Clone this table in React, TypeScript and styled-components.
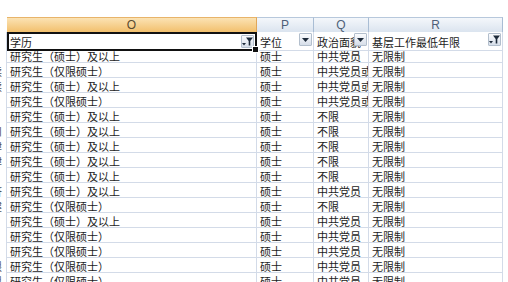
import styled, { createGlobalStyle, css } from "styled-components";

const GlobalStyle = createGlobalStyle`
    html, body {
        margin: 0;
        padding: 0;
        background: #ffffff;
        overflow: hidden;
    }
    body {
        font-family: "Noto Sans CJK SC", "Liberation Sans", sans-serif;
    }
`;

const COLS = "7px 250px 57px 55px 134px";
const GRID = "#d3dbe8";

const Sheet = styled.div`
    width: 508px;
    height: 282px;
    padding-top: 17px;
    box-sizing: border-box;
    overflow: hidden;
`;

const Row = styled.div<{ $h: number }>`
    display: grid;
    grid-template-columns: ${COLS};
    height: ${(p) => p.$h}px;
`;

const ColHead = styled.div<{ $active?: boolean; $blank?: boolean }>`
    display: flex;
    align-items: center;
    justify-content: center;
    font-family: "Liberation Sans", Arial, sans-serif;
    font-size: 12px;
    color: #4d5f78;
    box-sizing: border-box;
    border-right: 1px solid #a9bdd4;
    border-top: 1px solid #b7c8dc;
    background: linear-gradient(#f4f7fb, #dbe4ef);
    ${(p) =>
        p.$active &&
        css`
            background: linear-gradient(#fbe3b4, #f2c06d);
            color: #5a4a30;
            border-right-color: #e0a75a;
            border-top-color: #e8b46a;
        `}
    ${(p) =>
        p.$blank &&
        css`
            background: #ffffff;
            border: none;
        `}
`;

const Cell = styled.div<{ $edge?: boolean }>`
    position: relative;
    display: flex;
    align-items: center;
    padding: 1px 0 0 3px;
    box-sizing: border-box;
    font-size: 11px;
    line-height: 14px;
    color: #1c1c1c;
    white-space: nowrap;
    overflow: hidden;
    border-right: 1px solid ${GRID};
    border-bottom: 1px solid ${GRID};
    ${(p) =>
        p.$edge &&
        css`
            justify-content: flex-end;
            padding: 1px 4px 0 0;
            border-bottom: none;
            color: #555555;
        `}
`;

const Selected = styled(Cell)`
    overflow: visible;
    border: 2px solid #111111;
    padding-left: 1px;
    z-index: 2;
`;

const Clip = styled.span`
    overflow: hidden;
    display: block;
`;

const Handle = styled.span`
    position: absolute;
    right: -4px;
    bottom: -4px;
    width: 5px;
    height: 5px;
    background: #111111;
    border: 1px solid #ffffff;
`;

const FilterBtn = styled.span`
    position: absolute;
    right: 1px;
    top: 1px;
    width: 13px;
    height: 13px;
    box-sizing: border-box;
    border: 1px solid #b3bfcd;
    border-radius: 1px;
    background: linear-gradient(#fbfcfe, #d6dee9);
    display: flex;
    align-items: center;
    justify-content: center;
`;

function Arrow() {
    return (
        <svg width="7" height="4" viewBox="0 0 7 4">
            <path d="M0 0h7L3.5 4z" fill="#1d2a3a" />
        </svg>
    );
}

function Funnel() {
    return (
        <svg width="11" height="9" viewBox="0 0 11 9">
            <path d="M0 6h4L2 8.5z" fill="#1d2a3a" />
            <path d="M4 0.5h7L8.3 4v4.5H6.7V4z" fill="#1d2a3a" />
        </svg>
    );
}

type Data = { n: string; o: string; p: string; q: string; r: string };

const KA = "研究生（硕士）及以上";
const XA = "研究生（仅限硕士）";
const DY = "中共党员";
const HY = "中共党员或共青团员";
const BX = "不限";

const rows: Data[] = [
    { n: "", o: KA, p: "硕士", q: DY, r: "无限制" },
    { n: "读", o: XA, p: "硕士", q: HY, r: "无限制" },
    { n: "读", o: KA, p: "硕士", q: HY, r: "无限制" },
    { n: "", o: XA, p: "硕士", q: HY, r: "无限制" },
    { n: "", o: KA, p: "硕士", q: BX, r: "无限制" },
    { n: "川", o: KA, p: "硕士", q: BX, r: "无限制" },
    { n: "律", o: KA, p: "硕士", q: BX, r: "无限制" },
    { n: "律", o: KA, p: "硕士", q: BX, r: "无限制" },
    { n: "、", o: KA, p: "硕士", q: BX, r: "无限制" },
    { n: "济", o: KA, p: "硕士", q: DY, r: "无限制" },
    { n: "健", o: XA, p: "硕士", q: BX, r: "无限制" },
    { n: "", o: KA, p: "硕士", q: DY, r: "无限制" },
    { n: "", o: XA, p: "硕士", q: DY, r: "无限制" },
    { n: "", o: XA, p: "硕士", q: DY, r: "无限制" },
    { n: "限", o: XA, p: "硕士", q: DY, r: "无限制" },
    { n: "限", o: XA, p: "硕士", q: DY, r: "无限制" },
];

export default function App() {
    return (
        <>
            <GlobalStyle />
            <Sheet>
                <Row $h={15}>
                    <ColHead $blank />
                    <ColHead $active>O</ColHead>
                    <ColHead>P</ColHead>
                    <ColHead>Q</ColHead>
                    <ColHead>R</ColHead>
                </Row>
                <Row $h={16}>
                    <Cell $edge />
                    <Selected>
                        学历
                        <FilterBtn>
                            <Funnel />
                        </FilterBtn>
                        <Handle />
                    </Selected>
                    <Cell>
                        学位
                        <FilterBtn>
                            <Arrow />
                        </FilterBtn>
                    </Cell>
                    <Cell>
                        <Clip>政治面貌</Clip>
                        <FilterBtn>
                            <Arrow />
                        </FilterBtn>
                    </Cell>
                    <Cell>
                        基层工作最低年限
                        <FilterBtn>
                            <Funnel />
                        </FilterBtn>
                    </Cell>
                </Row>
                {rows.map((d, i) => (
                    <Row $h={15} key={i}>
                        <Cell $edge>{d.n}</Cell>
                        <Cell>{d.o}</Cell>
                        <Cell>{d.p}</Cell>
                        <Cell>{d.q}</Cell>
                        <Cell>{d.r}</Cell>
                    </Row>
                ))}
            </Sheet>
        </>
    );
}
